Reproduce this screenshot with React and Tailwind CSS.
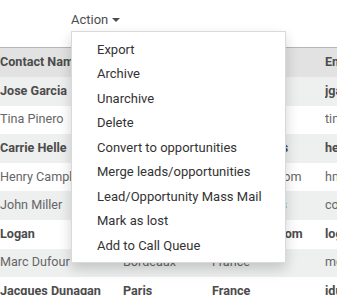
const rows = [
  { name: "Jose Garcia", city: "", country: "", email: "jgarcia@example.com", bold: true },
  { name: "Tina Pinero", city: "", country: "", email: "tina.pinero@example.com" },
  { name: "Carrie Helle", city: "", country: "United States", email: "helle@example.com", bold: true },
  { name: "Henry Campbell", city: "", country: "United Kingdom", email: "hmc@example.com" },
  { name: "John Miller", city: "", country: "United States", email: "contact@example.com" },
  { name: "Logan", city: "", country: "United Kingdom", email: "logan@example.com", bold: true },
  { name: "Marc Dufour", city: "Bordeaux", country: "France", email: "md@example.com" },
  { name: "Jacques Dunagan", city: "Paris", country: "France", email: "idunagan@example.com", bold: true },
];

const actions = [
  "Export",
  "Archive",
  "Unarchive",
  "Delete",
  "Convert to opportunities",
  "Merge leads/opportunities",
  "Lead/Opportunity Mass Mail",
  "Mark as lost",
  "Add to Call Queue",
];

function Cell({ children, bold }) {
  return (
    <div className={`overflow-hidden whitespace-nowrap ${bold ? "font-bold text-[#4c4c4c]" : "text-[#666666]"}`}>
      {children}
    </div>
  );
}

export default function App() {
  return (
    <div
      className="relative h-[295px] w-[337px] overflow-hidden bg-white text-[13px]"
      style={{ fontFamily: "Roboto, 'Liberation Sans', sans-serif" }}
    >
      <div className="flex h-[47px] items-start pl-[71px] pt-[10px]">
        <button className="flex items-center gap-[4px] text-[#4c4c4c]">
          <span>Action</span>
          <span className="mt-[1px] h-0 w-0 border-l-[4px] border-r-[4px] border-t-[4px] border-l-transparent border-r-transparent border-t-[#4c4c4c]" />
        </button>
      </div>

      <div className="border-t border-[#b5b5b5] text-[12.6px]">
        <div className="grid h-[29px] grid-cols-[123px_89px_113px_1fr] items-center bg-[#e2e2e2] font-bold text-[#4c4c4c]">
          <div className="whitespace-nowrap">Contact Name</div>
          <div className="whitespace-nowrap">City</div>
          <div className="whitespace-nowrap">Country</div>
          <div className="whitespace-nowrap">Email</div>
        </div>
        {rows.map((r, i) => (
          <div
            key={r.name}
            className={`grid h-[28.6px] grid-cols-[123px_89px_113px_1fr] items-center ${i % 2 === 0 ? "bg-[#eeefef]" : "bg-white"}`}
          >
            <Cell bold={r.bold}>{r.name}</Cell>
            <Cell bold={r.bold}>{r.city}</Cell>
            <Cell bold={r.bold}>{r.country}</Cell>
            <Cell bold={r.bold}>{r.email}</Cell>
          </div>
        ))}
      </div>

      <div className="absolute left-[71px] top-[31px] w-[215px] border border-[#d9d9d9] bg-white pb-[4px] pt-[5px] shadow-[0_6px_12px_rgba(0,0,0,0.18)]">
        {actions.map((a) => (
          <div key={a} className="flex h-[24.5px] items-center whitespace-nowrap pl-[25px] text-[#333333]">
            {a}
          </div>
        ))}
      </div>
    </div>
  );
}
